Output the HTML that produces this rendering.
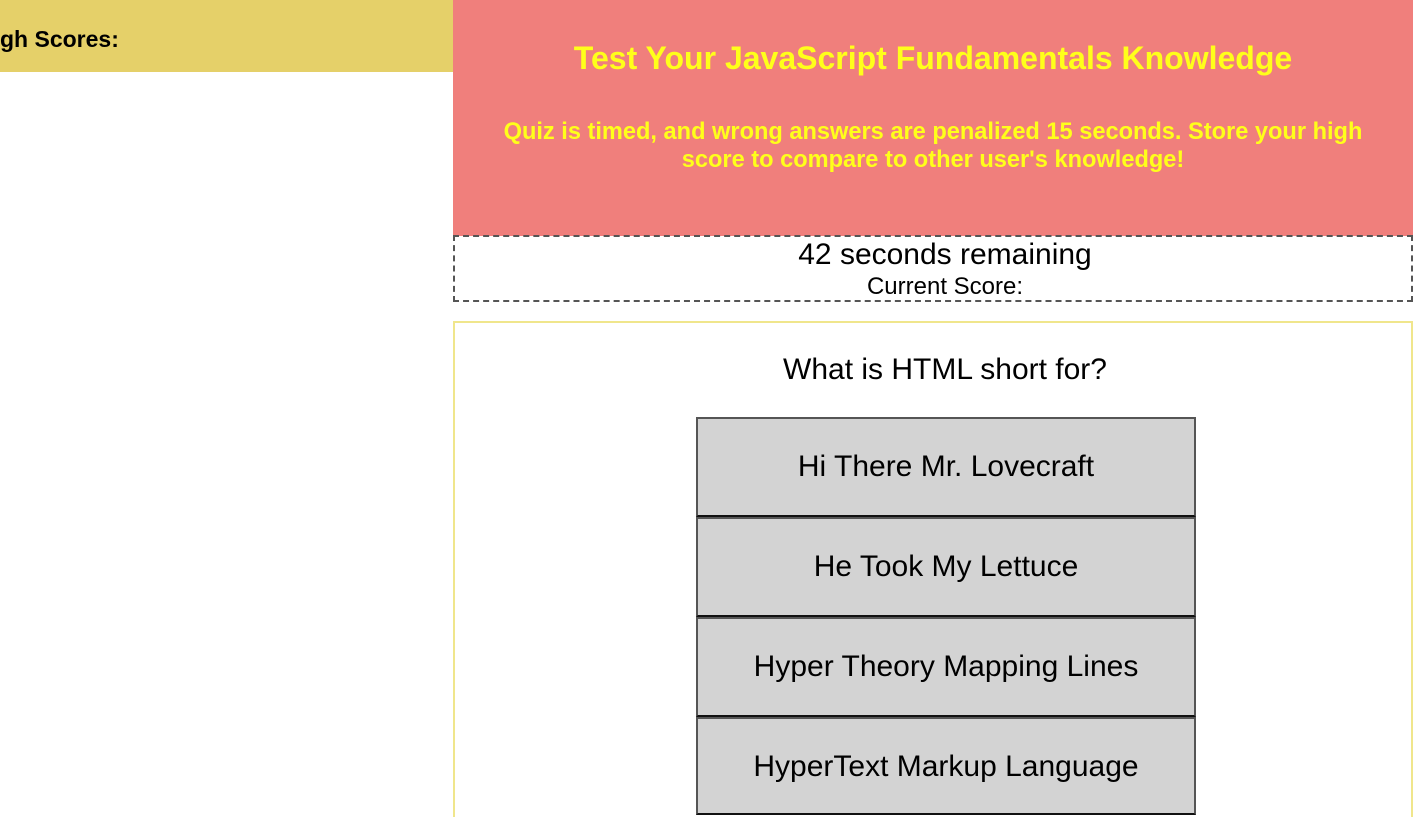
<!DOCTYPE html>
<html><head><style>
html,body{margin:0;width:1425px;height:817px;overflow:hidden;background:#fff;font-family:"Liberation Sans",Arial,sans-serif;position:relative}
.left{position:absolute;left:0;top:0;width:453px;height:72px;background:#e5d069}
.left span{position:absolute;left:-23px;top:26px;font-weight:bold;font-size:23px;white-space:nowrap;color:#000}
.hdr{position:absolute;left:453px;top:0;width:960px;height:236px;background:#f07f7c;color:#ffff1a;font-weight:bold;text-align:center}
.hdr h1{position:absolute;left:0;right:0;top:40px;margin:0;font-size:32px}
.hdr p{position:absolute;left:40px;right:40px;top:118px;margin:0;font-size:23.6px;line-height:28px}
.timer{position:absolute;left:453px;top:235px;width:956px;height:63px;border:2px dashed #555;text-align:center}
.q{position:absolute;left:453px;top:321px;width:956px;height:494px;border:2px solid #f0e68c;border-bottom:none}
.qt{position:absolute;left:24px;right:0;top:30px;text-align:center;font-size:30px}
.b{position:absolute;left:241px;width:496px;height:96px;background:#d3d3d3;border:2px solid #555;border-bottom-color:#111;text-align:center;line-height:96px;font-size:30px}
</style></head><body>
<div class="left"><span>High Scores:</span></div>
<div class="hdr"><h1>Test Your JavaScript Fundamentals Knowledge</h1>
<p>Quiz is timed, and wrong answers are penalized 15 seconds. Store your high score to compare to other user's knowledge!</p></div>
<div class="timer"><div style="position:absolute;left:24px;right:0;top:1px;font-size:30px">42 seconds remaining</div><div style="position:absolute;left:24px;right:0;top:36px;font-size:24px">Current Score:</div></div>
<div class="q"><div class="qt">What is HTML short for?</div>
<div class="b" style="top:94px">Hi There Mr. Lovecraft</div>
<div class="b" style="top:194px">He Took My Lettuce</div>
<div class="b" style="top:294px">Hyper Theory Mapping Lines</div>
<div class="b" style="top:394px;height:94px;line-height:96px">HyperText Markup Language</div>
</div>
</body></html>
